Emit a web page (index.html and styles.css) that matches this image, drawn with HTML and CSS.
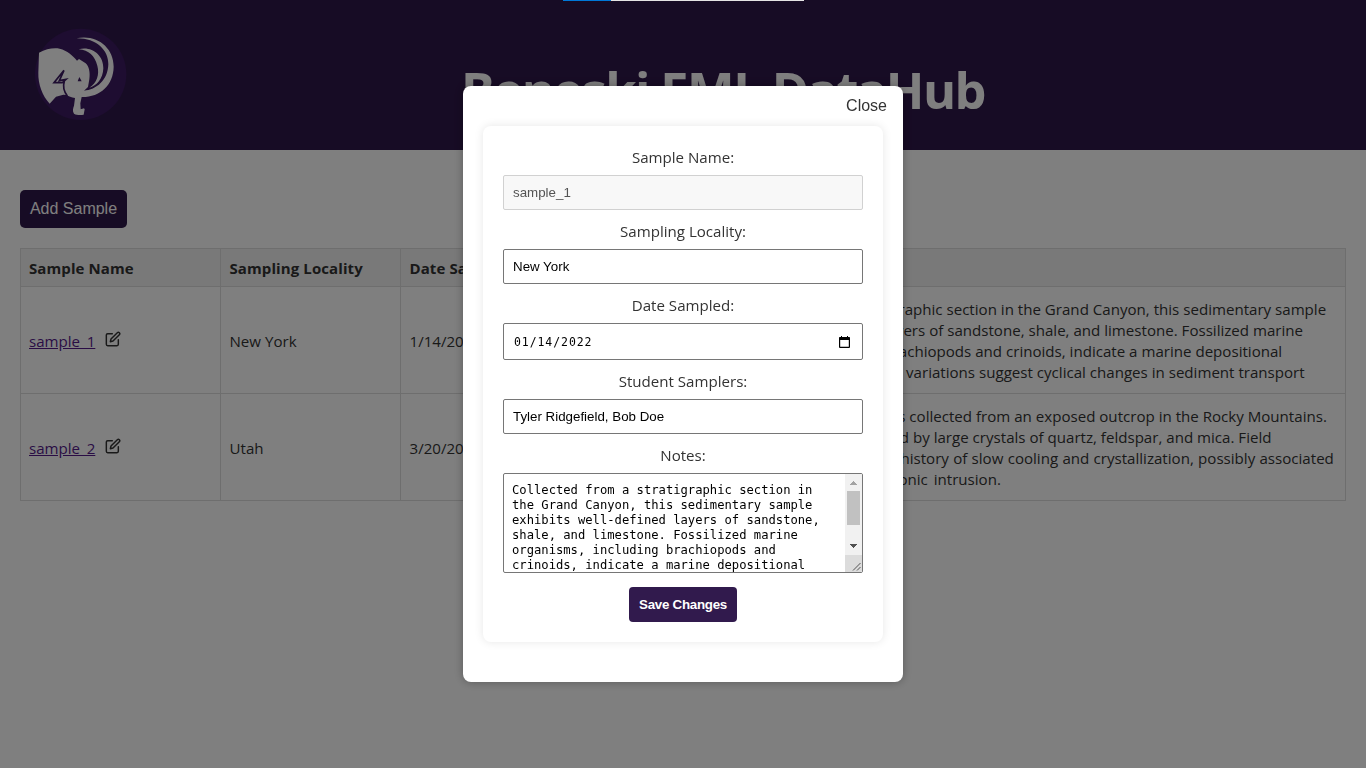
FILE: index.html
```html
<!DOCTYPE html>
<html lang="en">
<head>
<meta charset="utf-8">
<title>Beneski EML DataHub</title>
<link rel="stylesheet" href="styles.css">
</head>
<body>
<header class="banner">
  <svg class="logo" viewBox="0 0 360 330" aria-hidden="true">
    <circle cx="182" cy="163" r="137" fill="#3c1a62"/>
    <path fill="#fff" d="M57 98C78 87 99 83 119 86C142 91 158 107 171 122L177 117L197 130C207 139 211 158 208 178L204 201L192 212C229 210 264 180 265 133C266 91 229 54 169 55C231 42 281 83 281 140C280 196 240 232 185 231L181 250L182 268L192 265L194 268L191 284C181 286 171 286 162 281C157 274 159 264 162 257L165 234C154 232 146 229 140 225L130 224L108 230L89 251C67 227 54 192 55 158Z"/>
    <path fill="#fff" d="M176 88C213 77 251 104 250 145C249 176 230 198 208 203C231 189 239 163 232 137C224 107 207 91 176 88Z"/>
    <path fill="none" stroke="#3c1a62" stroke-width="5" d="M132 151L118 182L138 178L127 188L102 188L132 151M133 184C128 200 132 215 142 228"/>
    <path d="M173 184L178 171L185 184Z" fill="#3c1a62"/>
  </svg>
  <h1 class="title">Beneski EML DataHub</h1>
</header>
<main class="content">
  <button class="add" type="button">Add Sample</button>
  <table class="samples">
    <colgroup><col class="c-name"><col class="c-place"><col class="c-date"><col class="c-who"><col></colgroup>
    <thead><tr><th>Sample Name</th><th>Sampling Locality</th><th>Date Sampled</th><th>Samplers</th><th>Notes</th></tr></thead>
    <tbody>
      <tr>
        <td><a class="link" href="#">sample_1</a><svg class="edit" viewBox="0 0 24 24"><path d="M11 4H4a2 2 0 0 0-2 2v14a2 2 0 0 0 2 2h14a2 2 0 0 0 2-2v-7"/><path d="M18.5 2.5a2.12 2.12 0 0 1 3 3L12 15l-4 1 1-4z"/></svg></td>
        <td>New York</td><td>1/14/2022</td><td></td>
        <td><p class="notes"><span class="line">Collected from a stratigraphic section in the Grand Canyon, this sedimentary sample</span><span class="line">exhibits well-defined layers of sandstone, shale, and limestone. Fossilized marine</span><span class="line">organisms, including brachiopods and crinoids, indicate a marine depositional</span><span class="line">environment. Grain size variations suggest cyclical changes in sediment transport</span></p></td>
      </tr>
      <tr>
        <td><a class="link" href="#">sample_2</a><svg class="edit" viewBox="0 0 24 24"><path d="M11 4H4a2 2 0 0 0-2 2v14a2 2 0 0 0 2 2h14a2 2 0 0 0 2-2v-7"/><path d="M18.5 2.5a2.12 2.12 0 0 1 3 3L12 15l-4 1 1-4z"/></svg></td>
        <td>Utah</td><td>3/20/2022</td><td></td>
        <td><p class="notes"><span class="line">This granitic sample was collected from an exposed outcrop in the Rocky Mountains.</span><span class="line">The rock is characterized by large crystals of quartz, feldspar, and mica. Field</span><span class="line loose">observations suggest a history of slow cooling and crystallization, possibly associated</span><span class="line looser">with a larger-scale tectonic intrusion.</span></p></td>
      </tr>
    </tbody>
  </table>
</main>
<div class="overlay">
  <section class="modal">
    <div class="modal-top"><button class="close" type="button">Close</button></div>
    <form class="card">
      <label class="label">Sample Name:</label>
      <div class="field disabled">sample_1</div>
      <label class="label">Sampling Locality:</label>
      <div class="field">New York</div>
      <label class="label">Date Sampled:</label>
      <div class="field date"><span>01/14/2022</span><svg class="calendar" viewBox="0 0 11 12"><path d="M2 0h1v1h5V0h1v1h1.2q.8 0 .8.8V11q0 1-1 1H1q-1 0-1-1V1.800q0-.8.8-.8H2zM1.200 4v6.800h8.600V4z" fill="#000" fill-rule="evenodd"/></svg></div>
      <label class="label">Student Samplers:</label>
      <div class="field">Tyler Ridgefield, Bob Doe</div>
      <label class="label">Notes:</label>
      <div class="area">
        <div class="area-text">Collected from a stratigraphic section in
the Grand Canyon, this sedimentary sample
exhibits well-defined layers of sandstone,
shale, and limestone. Fossilized marine
organisms, including brachiopods and
crinoids, indicate a marine depositional</div>
        <svg class="scroll" viewBox="0 0 17 98" shape-rendering="crispEdges"><path fill="#f1f1f1" d="M0 0h17v98H0z"/><path fill="#a3a3a3" d="M8 7h1v1h1v1h1v1h1v1H5v-1h1V9h1V8h1z"/><path fill="#c1c1c1" d="M2 17h13v34H2z"/><path fill="#505050" d="M5 70h7v1h-1v1h-1v1H9v1H8v-1H7v-1H6v-1H5z"/><path fill="#dcdcdc" d="M0 81h17v17H0z"/><path d="M8 96.500L15.500 89M12 96.500l3.500-3.500" stroke="#555" fill="none" shape-rendering="auto"/></svg>
      </div>
      <button class="save" type="button">Save Changes</button>
    </form>
  </section>
</div>
<div class="progress"><div class="progress-value"></div></div>
</body>
</html>
```
FILE: styles.css
```css
* { box-sizing: border-box; }
body { margin: 0; height: 768px; overflow: hidden; background: #fff; color: #333; font: 15.1px/21px "Open Sans", "Noto Sans", sans-serif; }
button { border: 0; font-family: "Liberation Sans", Arial, sans-serif; }
.banner { height: 150px; padding: 20px; display: grid; grid-template-columns: 120px 1fr; background: #2f184a; }
.logo { width: 120px; height: 110px; }
.title { margin: 33px 0 0 321px; color: #fff; font-size: 50.5px; line-height: 74px; font-weight: 700; letter-spacing: -1.55px; white-space: nowrap; }
.content { padding: 40px 20px; }
.add { display: block; width: 107px; height: 38px; padding: 0; border-radius: 5px; background: #2f184a; color: #fff; font-size: 16px; }
.samples { width: 1326px; margin-top: 20px; table-layout: fixed; border-collapse: collapse; }
.c-name { width: 200px; }
.c-place { width: 180px; }
.c-date { width: 180px; }
.c-who { width: 145px; }
.samples th, .samples td { border: 1px solid #ddd; padding: 0 8px; text-align: left; }
.samples th { height: 38px; padding-top: 2px; background: #f2f2f2; font-weight: 700; font-size: 15px; letter-spacing: .1px; }
.samples td { height: 107px; padding-top: 3px; }
.samples td:last-child { padding-top: 1px; }
.samples th + th, .samples td + td { padding-left: 8.5px; }
.link { color: #551a8b; }
.edit { width: 16px; height: 16px; margin-left: 10px; vertical-align: 0; fill: none; stroke: #333; stroke-width: 2.2; stroke-linecap: round; stroke-linejoin: round; }
.notes { margin: 0; white-space: nowrap; }
.line { display: block; }
.loose { word-spacing: .36px; }
.looser { word-spacing: 2px; }
.overlay { position: fixed; inset: 0; display: flex; justify-content: center; align-items: center; background: rgba(0, 0, 0, .5); }
.modal { width: 440px; height: 596px; padding: 0 20px; border-radius: 8px; background: #fff; box-shadow: 0 0 10px rgba(0, 0, 0, .3); }
.modal-top { height: 40px; display: flex; justify-content: flex-end; margin-right: -4px; }
.close { height: 40px; padding: 0; background: none; color: #333; font-size: 16px; }
.card { height: 516px; padding: 10px 20px 20px; display: flex; flex-direction: column; border-radius: 8px; box-shadow: 0 0 10px rgba(0, 0, 0, .1); }
.label { height: 39px; padding-top: 10px; line-height: 23px; text-align: center; }
.field { height: 35px; padding: 0 9px; display: flex; align-items: center; border: 1px solid #767676; border-radius: 2px; color: #000; font: 13.333px "Liberation Sans", Arial, sans-serif; }
.disabled { border-color: #d1d1d1; background: #f8f8f8; color: #545454; }
.date { height: 37px; justify-content: space-between; padding: 0 12px 0 10px; font: 11.5px "DejaVu Sans Mono", monospace; letter-spacing: .92px; }
.calendar { width: 11px; height: 12px; }
.area { height: 100px; display: flex; justify-content: space-between; overflow: hidden; border: 1px solid #767676; border-radius: 2px; }
.area-text { padding: 9px 0 0 8px; color: #000; font: 12.18px/15px "DejaVu Sans Mono", monospace; white-space: pre; }
.scroll { width: 17px; height: 98px; flex: none; }
.save { width: 108px; height: 35px; margin-top: 14px; padding: 0; align-self: center; border-radius: 4px; background: #311a4d; color: #fff; font-size: 13.333px; font-weight: 700; letter-spacing: -.27px; }
.progress { position: fixed; top: 0; left: 563px; width: 241px; height: 1px; background: #e5e5e5; }
.progress-value { width: 48px; height: 1px; background: #0078d7; }
```
